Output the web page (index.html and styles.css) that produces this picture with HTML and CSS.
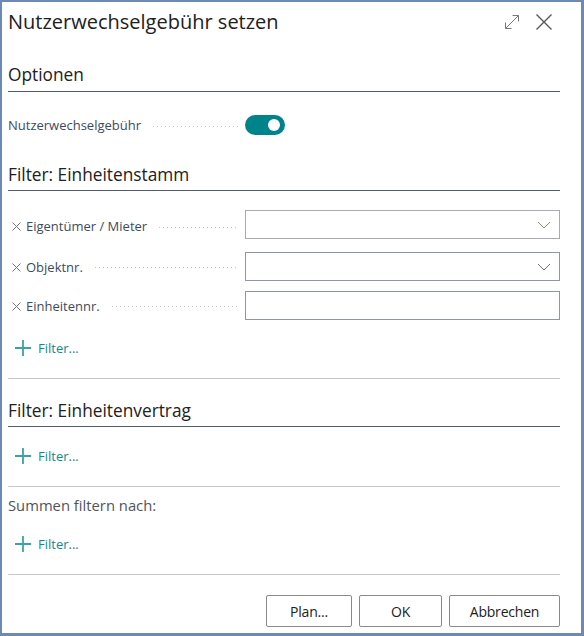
FILE: index.html
```html
<!DOCTYPE html>
<html lang="de">
<head>
<meta charset="utf-8">
<title>Nutzerwechselgebühr setzen</title>
<link rel="stylesheet" href="styles.css">
</head>
<body>
<div class="dialog">
  <div class="header">
    <div class="title">Nutzerwechselgebühr setzen</div>
    <div class="header-icons">
      <svg class="ico-expand" width="16" height="16" viewBox="0 0 16 16">
        <path d="M1.5 14.5 L14.5 1.5 M8.5 1.5 H14.5 V7.5 M1.5 8.5 V14.5 H7.5" fill="none" stroke="#7a7a7a" stroke-width="1"/>
      </svg>
      <svg class="ico-close" width="16" height="16" viewBox="0 0 16 16">
        <path d="M0.5 0.5 L15.5 15.5 M15.5 0.5 L0.5 15.5" fill="none" stroke="#555" stroke-width="1.4"/>
      </svg>
    </div>
  </div>

  <div class="section-title first">Optionen</div>
  <div class="field-row toggle-row">
    <div class="label"><span class="label-text">Nutzerwechselgebühr</span><span class="dots"></span></div>
    <div class="toggle"><span class="knob"></span></div>
  </div>

  <div class="section-title second">Filter: Einheitenstamm</div>
  <div class="filter-rows">
    <div class="field-row">
      <div class="label"><svg class="rm" width="9" height="9" viewBox="0 0 9 9"><path d="M0.5 0.5 L8.5 8.5 M8.5 0.5 L0.5 8.5" fill="none" stroke="#777" stroke-width="1"/></svg><span class="label-text">Eigentümer / Mieter</span><span class="dots"></span></div>
      <div class="input select first-select">
        <svg width="14" height="8" viewBox="0 0 14 8"><path d="M1 1 L7 7 L13 1" fill="none" stroke="#a08a70" stroke-width="1"/></svg>
      </div>
    </div>
    <div class="field-row row-two">
      <div class="label"><svg class="rm" width="9" height="9" viewBox="0 0 9 9"><path d="M0.5 0.5 L8.5 8.5 M8.5 0.5 L0.5 8.5" fill="none" stroke="#777" stroke-width="1"/></svg><span class="label-text">Objektnr.</span><span class="dots"></span></div>
      <div class="input select">
        <svg width="14" height="8" viewBox="0 0 14 8"><path d="M1 1 L7 7 L13 1" fill="none" stroke="#7c6f72" stroke-width="1"/></svg>
      </div>
    </div>
    <div class="field-row row-three">
      <div class="label"><svg class="rm" width="9" height="9" viewBox="0 0 9 9"><path d="M0.5 0.5 L8.5 8.5 M8.5 0.5 L0.5 8.5" fill="none" stroke="#777" stroke-width="1"/></svg><span class="label-text">Einheitennr.</span><span class="dots"></span></div>
      <div class="input"></div>
    </div>
  </div>
  <div class="add-filter first-add">
    <svg width="16" height="16" viewBox="0 0 16 16"><path d="M8 0 V16 M0 8 H16" fill="none" stroke="#3aa3a6" stroke-width="1.8"/></svg>
    <span>Filter...</span>
  </div>
  <div class="separator"></div>

  <div class="section-title third">Filter: Einheitenvertrag</div>
  <div class="add-filter">
    <svg width="16" height="16" viewBox="0 0 16 16"><path d="M8 0 V16 M0 8 H16" fill="none" stroke="#3aa3a6" stroke-width="1.8"/></svg>
    <span>Filter...</span>
  </div>
  <div class="separator"></div>

  <div class="sum-label">Summen filtern nach:</div>
  <div class="add-filter last">
    <svg width="16" height="16" viewBox="0 0 16 16"><path d="M8 0 V16 M0 8 H16" fill="none" stroke="#3aa3a6" stroke-width="1.8"/></svg>
    <span>Filter...</span>
  </div>
  <div class="separator"></div>

  <div class="buttons">
    <button class="btn btn-plan">Plan...</button>
    <button class="btn btn-ok">OK</button>
    <button class="btn btn-cancel">Abbrechen</button>
  </div>
</div>
</body>
</html>
```

FILE: styles.css
```css
* { box-sizing: border-box; }
html, body { margin: 0; padding: 0; background: #ffffff; }
body { font-family: "Open Sans", "Noto Sans", "Liberation Sans", sans-serif; }

.dialog {
  width: 584px;
  height: 636px;
  border-style: solid;
  border-color: #6d8ab3;
  border-width: 2px 3px 3px 2px;
  padding: 0 21px 0 6px;
  background: #fff;
  display: flex;
  flex-direction: column;
}

.header {
  height: 44px;
  padding-top: 8px;
  display: flex;
  justify-content: space-between;
  align-items: flex-start;
}
.title {
  font-size: 20px;
  line-height: 24px;
  color: #212121;
}
.header-icons {
  display: flex;
  align-items: center;
  gap: 16px;
  padding-top: 4px;
  margin-right: 8px;
}

.section-title {
  font-size: 17.3px;
  line-height: 22px;
  color: #212121;
  padding-bottom: 5px;
  border-bottom: 1px solid #505c6a;
}
.section-title.first { margin-top: 18px; }
.section-title.second { margin-top: 29px; padding-bottom: 4px; }
.section-title.third { margin-top: 21px; padding-bottom: 4px; }

.field-row {
  display: flex;
  align-items: center;
  height: 29px;
}
.toggle-row { margin-top: 23px; height: 20px; }

.label {
  width: 237px;
  display: flex;
  align-items: center;
  font-size: 13px;
  color: #3d4b5e;
  padding-top: 3px;
}
.row-two .label, .row-three .label { padding-top: 0; }
.toggle-row .label { padding-top: 0; }
.rm {
  margin: 1px 5px 0 4px;
  flex: none;
}
.dots {
  flex: 1;
  height: 1px;
  margin: 2px 6px 0 12px;
  background-image: linear-gradient(to right, #c4c4c4 1px, transparent 1px);
  background-size: 4px 1px;
  background-repeat: repeat-x;
}

.toggle {
  width: 40px;
  height: 20px;
  border-radius: 10px;
  background: #00838a;
  position: relative;
}
.knob {
  position: absolute;
  right: 5px;
  top: 4px;
  width: 12px;
  height: 12px;
  border-radius: 50%;
  background: #ffffff;
}

.filter-rows {
  margin-top: 19px;
  display: flex;
  flex-direction: column;
}
.row-two { margin-top: 13px; }
.row-three { margin-top: 10px; }
.input {
  flex: 1;
  height: 29px;
  border: 1px solid #8e96a3;
  display: flex;
  align-items: center;
  justify-content: flex-end;
  padding-right: 8px;
}
.input.first-select { border-color: #a9abae; }

.add-filter {
  height: 20px;
  margin-top: 19px;
  display: flex;
  align-items: center;
  padding-left: 7px;
  gap: 7px;
  font-size: 13px;
  color: #0f8a91;
}
.add-filter.first-add { margin-top: 18px; }
.add-filter.last { margin-top: 20px; }

.separator {
  margin-top: 20px;
  height: 1px;
  background: #c3c6ca;
}

.sum-label {
  margin-top: 9px;
  height: 18px;
  line-height: 18px;
  font-size: 14.8px;
  color: #4f545a;
}

.buttons {
  margin-top: 20px;
  display: flex;
  justify-content: flex-end;
  gap: 7px;
}
.btn {
  height: 32px;
  border: 1px solid #8a8a8a;
  border-radius: 2px;
  background: #fff;
  font-family: "Open Sans", "Noto Sans", "Liberation Sans", sans-serif;
  font-size: 14px;
  color: #212121;
  padding: 0;
  letter-spacing: -0.2px;
}
.btn-plan { width: 86px; }
.btn-ok { width: 83px; }
.btn-cancel { width: 111px; }
```
